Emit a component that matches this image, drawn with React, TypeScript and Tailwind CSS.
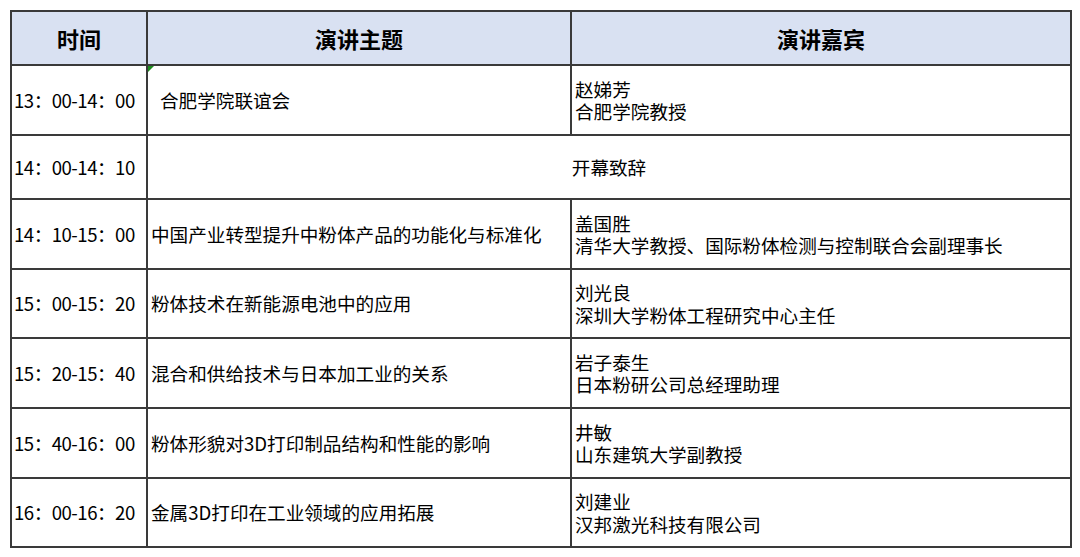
const rows = [
  { time: "13：00-14：00", topic: "合肥学院联谊会", name: "赵娣芳", title: "合肥学院教授", h: "h-[70px]", indent: true },
  { time: "14：00-14：10", topic: "开幕致辞", merged: true, h: "h-[64px]" },
  { time: "14：10-15：00", topic: "中国产业转型提升中粉体产品的功能化与标准化", name: "盖国胜", title: "清华大学教授、国际粉体检测与控制联合会副理事长", h: "h-[70px]" },
  { time: "15：00-15：20", topic: "粉体技术在新能源电池中的应用", name: "刘光良", title: "深圳大学粉体工程研究中心主任", h: "h-[69px]" },
  { time: "15：20-15：40", topic: "混合和供给技术与日本加工业的关系", name: "岩子泰生", title: "日本粉研公司总经理助理", h: "h-[70px]" },
  { time: "15：40-16：00", topic: "粉体形貌对3D打印制品结构和性能的影响", name: "井敏", title: "山东建筑大学副教授", h: "h-[70px]" },
  { time: "16：00-16：20", topic: "金属3D打印在工业领域的应用拓展", name: "刘建业", title: "汉邦激光科技有限公司", h: "h-[69px]" },
];

const cell = "border-2 border-[#3a3a3a] align-middle p-0";

const App = () => {
  return (
    <div
      className="w-[1080px] h-[557px] bg-white pt-[10px] pl-[10px] text-black"
      style={{ fontFamily: '"Noto Sans CJK SC", "Noto Sans", sans-serif' }}
    >
      <table className="table-fixed border-collapse w-[1060px]">
        <colgroup>
          <col className="w-[136px]" />
          <col className="w-[424px]" />
          <col className="w-[500px]" />
        </colgroup>
        <thead>
          <tr className="h-[54px] bg-[#d9e1f2] text-[22px] font-bold">
            <th className={`${cell} text-center`}>时间</th>
            <th className={`${cell} text-center`}>演讲主题</th>
            <th className={`${cell} text-center`}>演讲嘉宾</th>
          </tr>
        </thead>
        <tbody className="text-[18.6px] leading-[22.5px]">
          {rows.map((row) => (
            <tr key={row.time} className={row.h}>
              <td className={`${cell} pl-[2px] whitespace-nowrap tracking-[-0.5px]`}>{row.time}</td>
              {row.merged ? (
                <td colSpan={2} className={`${cell} text-center`}>
                  {row.topic}
                </td>
              ) : (
                <>
                  <td className={`${cell} relative whitespace-nowrap ${row.indent ? "pl-[12px]" : "pl-[3px]"}`}>
                    {/* excel error marker */}
                    {row.indent && (
                      <span className="absolute left-0 top-0 w-0 h-0 border-t-[6px] border-r-[6px] border-t-[#1e8c1e] border-r-transparent" />
                    )}
                    {row.topic}
                  </td>
                  <td className={`${cell} pl-[3px] whitespace-nowrap`}>
                    <div>{row.name}</div>
                    <div>{row.title}</div>
                  </td>
                </>
              )}
            </tr>
          ))}
        </tbody>
      </table>
    </div>
  );
};

export default App;
